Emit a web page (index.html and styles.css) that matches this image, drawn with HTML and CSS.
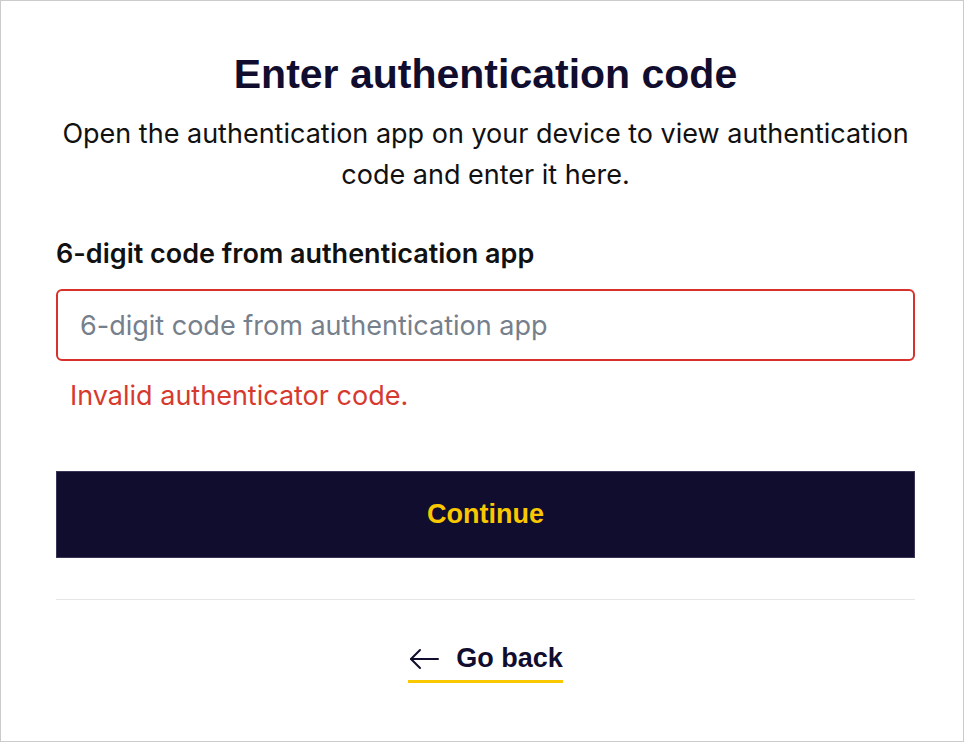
FILE: index.html
```html
<!DOCTYPE html>
<html lang="en">
<head>
<meta charset="UTF-8">
<meta name="viewport" content="width=device-width, initial-scale=1.0">
<title>Enter authentication code</title>
<link rel="stylesheet" href="styles.css">
</head>
<body>

<div class="frame">
    <div class="container">
        <h1 class="title">Enter authentication code</h1>
        <p class="intro">Open the authentication app on your device to view authentication code and enter it here.</p>

        <form class="code-form" onsubmit="return false;">
            <label class="field-label" for="code">6-digit code from authentication app</label>
            <input id="code" class="field-input has-error" type="text" placeholder="6-digit code from authentication app">
            <div class="field-error">Invalid authenticator code.</div>

            <button class="btn-continue" type="submit">Continue</button>
        </form>

        <hr class="divider">

        <div class="back-row">
            <a href="#" class="back-link">
                <svg class="back-arrow" width="32" height="24" viewBox="0 0 32 24" fill="none" stroke="#110d2e" stroke-width="2" stroke-linecap="round" stroke-linejoin="round">
                    <path d="M30 12H3"/>
                    <path d="M12 3L3 12L12 21"/>
                </svg>
                <span>Go back</span>
            </a>
        </div>
    </div>
</div>

</body>
</html>
```

FILE: styles.css
```css
body {
    margin: 0;
    padding: 0;
    background-color: #fff;
    font-family: Inter, "Noto Sans", sans-serif;
    color: #111;
}

.frame {
    width: 962px;
    height: 740px;
    border: 1px solid #cbcbcb;
    background-color: #fff;
}

.container {
    width: 859px;
    margin-left: 55px;
    padding-top: 48px;
}

.title {
    font-family: "Liberation Sans", Arial, sans-serif;
    font-size: 41px;
    font-weight: bold;
    color: #110d2e;
    text-align: center;
    margin: 0;
    line-height: 50px;
}

.intro {
    font-size: 27px;
    line-height: 41px;
    text-align: center;
    margin: 14px 0 0;
    color: #111;
}

.code-form {
    display: flex;
    flex-direction: column;
    margin-top: 43px;
}

.field-label {
    font-size: 27px;
    font-weight: 600;
    line-height: 32px;
    color: #111;
}

.field-input {
    box-sizing: border-box;
    height: 72px;
    margin-top: 19px;
    padding: 0 22px;
    font-family: Inter, "Noto Sans", sans-serif;
    font-size: 27px;
    color: #111;
    border: 2px solid #ccc;
    border-radius: 6px;
    outline: none;
}

.field-input::placeholder {
    color: #76808c;
}

.field-input.has-error {
    border-color: #d6312b;
}

.field-error {
    color: #d63a2f;
    font-size: 27px;
    line-height: 32px;
    margin-top: 19px;
    padding-left: 14px;
}

.btn-continue {
    height: 87px;
    margin-top: 59px;
    background-color: #110d2e;
    border: 1px solid #3a3556;
    color: #fac800;
    font-family: "Liberation Sans", Arial, sans-serif;
    font-size: 27px;
    font-weight: bold;
    cursor: pointer;
}

.divider {
    border: none;
    border-top: 1px solid #e6e6e6;
    margin: 41px 0 0;
}

.back-row {
    display: flex;
    justify-content: center;
    margin-top: 43px;
}

.back-link {
    display: flex;
    align-items: center;
    gap: 16px;
    padding-bottom: 6px;
    border-bottom: 3px solid #fac800;
    color: #110d2e;
    text-decoration: none;
    font-family: "Liberation Sans", Arial, sans-serif;
    font-size: 27px;
    font-weight: bold;
}
```
